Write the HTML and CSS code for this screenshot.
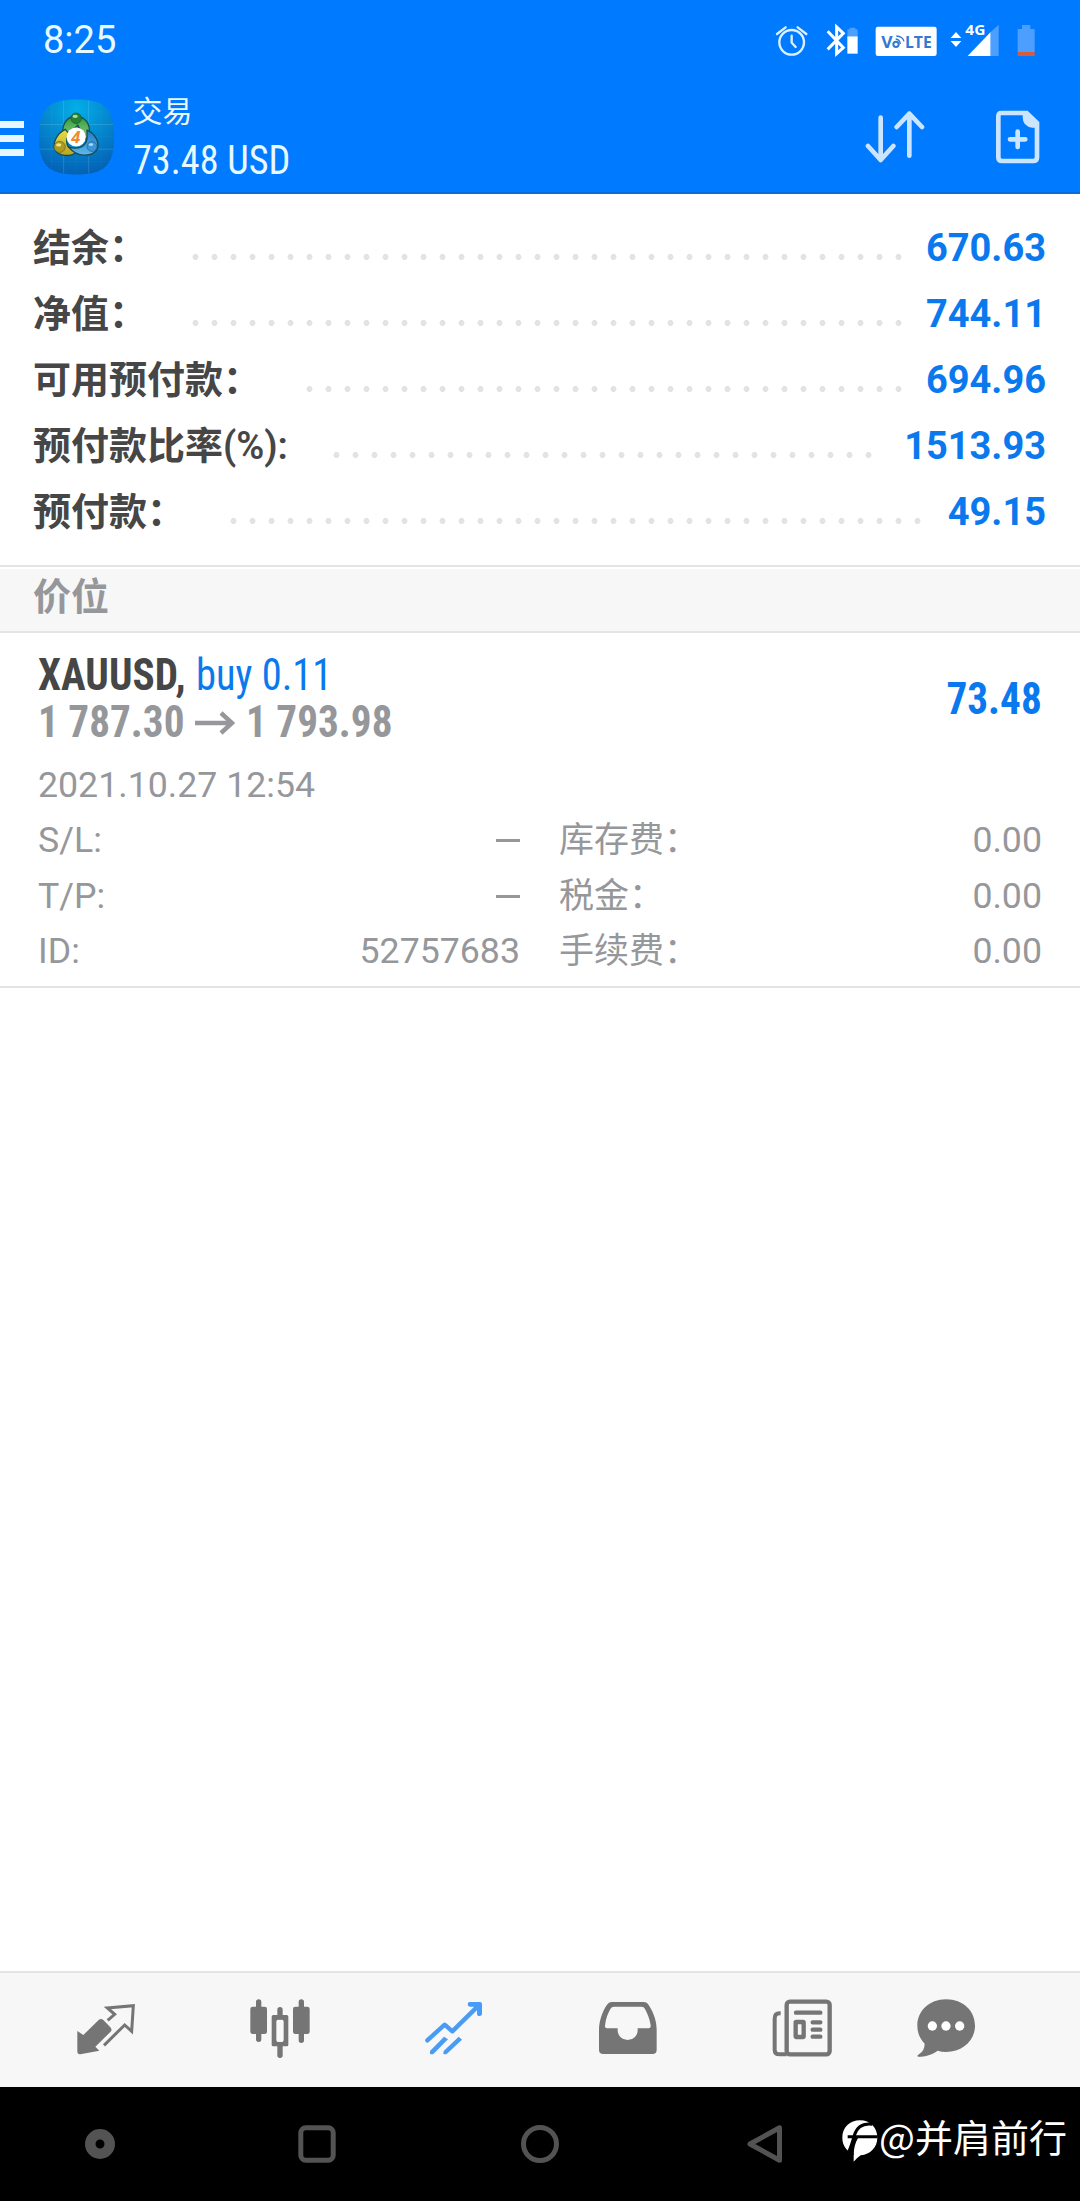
FILE: index.html
```html
<!DOCTYPE html>
<html lang="zh-CN">
<head>
<meta charset="utf-8">
<title>交易</title>
<link rel="stylesheet" href="styles.css">
</head>
<body>
<div class="screen">
  <header class="top">
    <div class="status">
      <span class="clock">8:25</span>
      <svg class="status-icons" width="270" height="44" viewBox="100 60 810 132" aria-hidden="true">
        <g fill="none" stroke="#dcf0ff" stroke-width="7" stroke-linecap="round">
          <circle cx="156" cy="127" r="37"/>
          <path d="M156 107V128L168 141M112 102L138 82M200 102L174 82"/>
        </g>
        <path d="M264 94L311 143L291 161V81L311 100L264 148" fill="none" stroke="#fff" stroke-width="9"/>
        <path d="M323 109V88H330V83H347V88H354V109Z" fill="#4d9fff"/>
        <path d="M323 109H354V161H323Z" fill="#fff"/>
        <rect x="408" y="80" width="183" height="88" rx="7" fill="#fff"/>
        <text class="volte" x="425" y="143" textLength="34" lengthAdjust="spacingAndGlyphs">V</text>
        <text class="volte" x="496" y="143" textLength="80" lengthAdjust="spacingAndGlyphs">LTE</text>
        <circle cx="469" cy="133" r="8" fill="none" stroke="#3578d4" stroke-width="6"/>
        <path d="M468 117Q480 118 482 132M470 108Q489 109 493 124" fill="none" stroke="#3578d4" stroke-width="4"/>
        <path d="M633 114L649 96L665 114ZM633 123H665L649 141Z" fill="#fff"/>
        <path d="M684 168L753 96V168Z" fill="#fff"/>
        <path d="M753 96L777 74V168H753Z" fill="#4d9fff"/>
        <text class="network" x="677" y="104" textLength="60" lengthAdjust="spacingAndGlyphs">4G</text>
        <path d="M834 156V87H847V75H872V87H885V156Z" fill="#4d9fff"/>
        <path d="M834 156H885V168H834Z" fill="#d95a3c"/>
      </svg>
    </div>
    <div class="appbar">
      <svg class="menu" width="24" height="36" viewBox="0 0 24 36"><path d="M0 0H24V7H0ZM0 14H24V21H0ZM0 28H24V35H0Z" fill="#e8f7ff"/></svg>
      <svg class="logo" width="75" height="76" viewBox="0 0 228 228">
        <defs>
          <radialGradient id="tile" cx=".5" cy=".12" r=".9"><stop offset="0" stop-color="#03aee9"/><stop offset=".5" stop-color="#0487cd"/><stop offset="1" stop-color="#0360b5"/></radialGradient>
          <linearGradient id="green" x2="0" y2="1"><stop offset="0" stop-color="#2f9b3e"/><stop offset="1" stop-color="#8fd07e"/></linearGradient>
          <linearGradient id="gold" x2="0" y2="1"><stop offset="0" stop-color="#e8dd4a"/><stop offset="1" stop-color="#b9a41f"/></linearGradient>
          <linearGradient id="sky" x2="0" y2="1"><stop offset="0" stop-color="#2378c4"/><stop offset="1" stop-color="#5db9ee"/></linearGradient>
        </defs>
        <path d="M114 0C200 0 228 28 228 114S200 228 114 228S0 200 0 114S28 0 114 0Z" fill="url(#tile)"/>
        <path d="M75 3V225M151 3V225M3 76H225M3 151H225" stroke="#fff" stroke-opacity=".14" stroke-width="3"/>
        <path d="M38 6V222M113 0V228M188 6V222M6 38H222M0 113H228M6 188H222" stroke="#fff" stroke-opacity=".05" stroke-width="2"/>
        <g stroke="#174e55" stroke-width="4">
          <path d="M72 100C72 65 93 51 112 51S153 66 153 91C153 109 147 117 140 122L118 78L92 104Z" fill="url(#green)"/>
          <path d="M80 91C52 105 42 132 48 151C58 173 94 176 113 160L94 148C80 138 83 118 91 104Z" fill="url(#gold)"/>
          <path d="M146 93C174 104 184 135 177 151C164 175 115 178 91 145C117 153 143 145 146 119Z" fill="url(#sky)"/>
        </g>
        <circle cx="113" cy="114" r="29" fill="#fff"/>
        <circle cx="113" cy="57" r="16" fill="#287f36" stroke="#18542c" stroke-width="2"/>
        <circle cx="63" cy="144" r="17" fill="#ae9920" stroke="#65672a" stroke-width="2"/>
        <circle cx="161" cy="143" r="15" fill="#3b95d6" stroke="#1c5f9e" stroke-width="2"/>
        <ellipse cx="110" cy="51" rx="8" ry="5" fill="#a6df9a"/><ellipse cx="60" cy="138" rx="8" ry="5" fill="#f0e78c"/><ellipse cx="158" cy="137" rx="7" ry="4" fill="#a7dcff"/>
        <text class="logo-four" x="98" y="132">4</text>
      </svg>
      <div class="titles">
        <div class="title">交易</div>
        <div class="balance"><span class="cond">73.48 USD</span></div>
      </div>
      <svg class="action sort" width="60" height="54" viewBox="375 333 180 162"><path d="M422 353V480M384 438L422 480L460 438M508 467V341M470 381L508 341L546 381" fill="none" stroke="#cce5ff" stroke-width="14" stroke-linecap="round" stroke-linejoin="round"/></svg>
      <svg class="action" width="46" height="54" viewBox="766 330 138 162">
        <path d="M785 339H861L892 369V472Q892 483 881 483H787Q776 483 776 472V349Q776 339 785 339Z" fill="none" stroke="#cce5ff" stroke-width="14"/>
        <path d="M849 337H865L894 366V383H878Q849 380 849 352Z" fill="#cce5ff"/>
        <path d="M834 395V441M811 418H857" stroke="#cce5ff" stroke-width="14" stroke-linecap="round"/>
      </svg>
    </div>
  </header>

  <section class="summary">
    <div class="sum-row"><span class="sum-label">结余：</span><i class="dots" style="width:722px"></i><b class="sum-value">670.63</b></div>
    <div class="sum-row"><span class="sum-label">净值：</span><i class="dots" style="width:722px"></i><b class="sum-value">744.11</b></div>
    <div class="sum-row"><span class="sum-label">可用预付款：</span><i class="dots" style="width:608px"></i><b class="sum-value">694.96</b></div>
    <div class="sum-row"><span class="sum-label">预付款比率(%):</span><i class="dots" style="width:551px"></i><b class="sum-value">1513.93</b></div>
    <div class="sum-row"><span class="sum-label">预付款：</span><i class="dots" style="width:703px"></i><b class="sum-value">49.15</b></div>
  </section>

  <h2 class="section-title">价位</h2>

  <section class="position">
    <div class="pos-head">
      <div>
        <div class="pos-line"><span class="cond symbol">XAUUSD,</span><span class="cond side">buy 0.11</span></div>
        <div class="pos-line prices"><span class="cond price">1 787.30</span><svg class="arrow" width="40" height="24" viewBox="0 0 40 24"><path d="M0 12H37M26 2L37 12L26 22" fill="none" stroke="#96979b" stroke-width="4.4"/></svg><span class="cond price">1 793.98</span></div>
      </div>
      <div class="profit"><span class="cond">73.48</span></div>
    </div>
    <div class="date">2021.10.27 12:54</div>
    <div class="details">
      <span>S/L:</span><span class="dash"></span><span class="zh">库存费：</span><span>0.00</span>
      <span>T/P:</span><span class="dash"></span><span class="zh">税金：</span><span>0.00</span>
      <span>ID:</span><span>52757683</span><span class="zh">手续费：</span><span>0.00</span>
    </div>
  </section>

  <nav class="tabs">
    <div class="tab"><svg width="60" height="60" viewBox="108 114 180 180">
      <path d="M203 181L224 163L202 144L280 137L275 214L254 195L192 256" fill="none" stroke="#757575" stroke-width="9"/>
      <path d="M112 213L130 225L176 180Q183 174 190 180L211 202Q218 209 211 216L166 260L178 272L121 283Q112 284 112 274Z" fill="#757575"/>
    </svg></div>
    <div class="tab"><svg width="60" height="60" viewBox="629 114 180 180">
      <path d="M655 126V238M783 126V241M719 149V170M719 255V286" stroke="#757575" stroke-width="16" stroke-linecap="round"/>
      <rect x="630" y="140" width="50" height="82" rx="7" fill="#757575"/><rect x="758" y="140" width="50" height="82" rx="7" fill="#757575"/>
      <path fill-rule="evenodd" d="M699 165H739Q744 165 744 170V254Q744 259 739 259H699Q694 259 694 254V170Q694 165 699 165ZM713 179Q708 179 708 185V240Q708 246 713 246H725Q730 246 730 240V185Q730 179 725 179Z" fill="#757575"/>
    </svg></div>
    <div class="tab"><svg width="60" height="60" viewBox="1152 114 180 180">
      <path d="M1162 241L1214 194L1237 214L1313 139" fill="none" stroke="#4a9bf3" stroke-width="13" stroke-linecap="round" stroke-linejoin="round"/>
      <path d="M1290 126H1320Q1326 126 1326 132V161Q1326 168 1319 168Q1311 168 1311 161V151L1301 140H1290Q1283 140 1283 133T1290 126Z" fill="#459df9"/>
      <path d="M1170 273L1212 230L1224 238L1181 281Q1175 285 1170 281ZM1211 273L1256 230L1266 239L1221 281Q1214 285 1210 281Z" fill="#4a9bf3"/>
    </svg></div>
    <div class="tab"><svg width="60" height="60" viewBox="115 114 180 180">
      <path fill-rule="evenodd" d="M155 126H252Q262 126 267 135C282 158 291 183 291 210V269Q291 282 278 282H131Q118 282 118 269V210C118 184 127 156 142 134Q147 126 155 126ZM163 140Q156 140 152 147C145 160 138 176 136 197Q135 205 142 205H174V211A30 29 0 0 0 234 211V205H267Q274 205 273 196C270 176 263 160 256 147Q253 140 246 140Z" fill="#757575"/>
    </svg></div>
    <div class="tab"><svg width="60" height="60" viewBox="637 114 180 180">
      <rect x="681" y="125" width="129" height="158" rx="10" fill="none" stroke="#757575" stroke-width="13"/>
      <path d="M663 160H660Q645 160 645 176V269Q645 283 660 283H681" fill="none" stroke="#757575" stroke-width="12"/>
      <path d="M709 158H782M759 187H782M759 209H782M759 230H782" stroke="#757575" stroke-width="13" stroke-linecap="round"/>
      <rect x="708" y="186" width="24" height="45" rx="2" fill="none" stroke="#757575" stroke-width="13"/>
    </svg></div>
    <div class="tab"><svg width="60" height="60" viewBox="1068 114 180 180">
      <path d="M1158 118C1210 118 1245 153 1245 197S1208 276 1158 276Q1145 276 1133 272C1115 284 1098 290 1074 290Q1070 286 1077 283Q1094 272 1094 251Q1072 229 1072 197C1072 153 1108 118 1158 118Z" fill="#757575"/>
      <g fill="#fff"><circle cx="1117" cy="198" r="14"/><circle cx="1158" cy="198" r="14"/><circle cx="1199" cy="198" r="14"/></g>
    </svg></div>
  </nav>

  <footer class="sysnav">
    <svg width="40" height="40" viewBox="0 0 40 40"><circle cx="20" cy="20" r="9.75" fill="none" stroke="#535353" stroke-width="10.5"/></svg>
    <svg class="recent" width="40" height="40" viewBox="0 0 40 40"><rect x="3.8" y="3.8" width="32.4" height="32.4" rx="5" fill="none" stroke="#535353" stroke-width="5"/></svg>
    <svg class="home" width="40" height="40" viewBox="0 0 40 40"><circle cx="20" cy="20" r="16.5" fill="none" stroke="#535353" stroke-width="5"/></svg>
    <svg class="back" width="40" height="40" viewBox="0 0 40 40"><path d="M34.5 3.8V36.2L5 20Z" fill="none" stroke="#535353" stroke-width="5" stroke-linejoin="round"/></svg>
    <div class="author">
      <svg width="36" height="42" viewBox="845 484 108 126">
        <path d="M899 485C930 485 951 508 951 537C951 566 930 587 901 590Q888 599 880 609V585C857 577 846 559 846 537C846 506 869 485 899 485Z" fill="#fff"/>
        <path d="M936 497C906 493 890 505 882 530C877 548 873 562 866 577M862 534H952" fill="none" stroke="#000" stroke-width="9"/>
        <path d="M893 538Q880 560 880 590L861 580Q874 562 881 538Z" fill="#000"/>
      </svg><span>@并肩前行</span>
    </div>
  </footer>
</div>
</body>
</html>
```
FILE: styles.css
```css
* { box-sizing: border-box; }
body {
  margin: 0;
  background: #fff;
  font-family: Roboto, "Noto Sans CJK SC", sans-serif;
}
svg { display: block; flex: none; }
.screen {
  width: 1080px;
  height: 2201px;
  display: flex;
  flex-direction: column;
  overflow: hidden;
}

/* Header */
.top {
  height: 194px;
  background: #007aff;
  border-bottom: 2px solid #0d6bd6;
  color: #e8f9ff;
}
.status {
  height: 80px;
  padding: 0 37px 0 43px;
  display: flex;
  justify-content: space-between;
}
.clock { font-size: 38px; line-height: 80px; }
.status-icons { margin-top: 20px; }
.volte { font: 700 49px "Open Sans", sans-serif; fill: #3578d4; }
.network { font: 700 43px "Open Sans", sans-serif; fill: #fff; }
.appbar {
  height: 112px;
  display: flex;
  align-items: flex-start;
}
.menu { margin-top: 41px; }
.logo { margin: 19px 0 0 14.5px; }
.logo-four { font: italic 700 50px "Open Sans", sans-serif; fill: #f08a2c; }
.titles { margin-left: 19px; flex: 1; }
.title { font-size: 30px; line-height: 40px; margin-top: 12px; }
.balance { font-size: 40px; line-height: 48px; margin-top: 5px; }
.cond {
  display: inline-block;
  white-space: pre;
  font-family: "Roboto Condensed", Roboto, sans-serif;
  font-stretch: 75%;
  transform: scaleX(.937);
  transform-origin: left;
}
.balance .cond { transform: scaleX(.955); }
.action { margin: 30px 39px 0 0; }
.sort { margin-top: 31px; margin-right: 70px; }

/* Account summary */
.summary { height: 371px; padding: 21px 34px 0 33px; }
.sum-row { height: 66px; display: flex; }
.sum-label, .sum-value { font-size: 38px; line-height: 66px; font-weight: 700; white-space: nowrap; }
.sum-label { color: #464646; font-weight: 600; }
.sum-value { color: #0b79ee; margin-left: auto; }
.dots {
  flex: none;
  height: 8px;
  margin: 38px 0 0 39px;
  background: radial-gradient(circle at 9.5px 4px, #e3e3e3 2.7px, transparent 3.3px) 0 0 / 19px 8px repeat-x;
}

.section-title {
  height: 68px;
  margin: 0;
  padding-left: 33px;
  border: solid #e4e4e4;
  border-width: 2px 0;
  background: #f7f7f7;
  box-shadow: inset 0 2px #fff;
  color: #96979b;
  font-size: 38px;
  line-height: 60px;
  font-weight: 700;
}

/* Open position */
.position {
  height: 355px;
  padding: 19px 38px 0;
  border-bottom: 2px solid #e4e4e4;
  color: #96979b;
  font-size: 35.7px;
}
.pos-head { display: flex; justify-content: space-between; font-size: 44px; height: 105px; }
.pos-line { height: 47px; line-height: 47px; display: flex; align-items: center; }
.symbol { color: #464646; font-weight: 700; }
.side { color: #0b79ee; transform: scaleX(.92); }
.prices, .profit { font-weight: 700; }
.price { margin-right: -10px; }
.profit { color: #0b79ee; line-height: 94px; }
.profit .cond { transform-origin: right; }
.arrow { margin: 0 11px; }
.date { line-height: 56px; }
.details {
  display: grid;
  grid-template-columns: 100px 382px 240px 1fr;
  grid-auto-rows: 55.5px;
  line-height: 55px;
}
.zh { font-size: 35px; padding-left: 39px; }
.details > :nth-child(even) { justify-self: end; }
.dash { width: 24px; height: 3px; background: #96979b; margin-top: 26px; }

/* Bottom bars */
.tabs {
  margin-top: auto;
  height: 116px;
  padding: 25px 0 0 19px;
  border-top: 2px solid #e4e4e4;
  background: #f7f7f7;
  display: flex;
}
.tab { width: 174px; display: flex; justify-content: center; align-items: flex-start; }
.tab:last-child { width: 114px; }
.sysnav {
  height: 114px;
  padding-left: 80px;
  background: #000;
  display: flex;
  align-items: center;
}
.recent { margin-left: 177px; }
.home { margin-left: 183px; }
.back { margin-left: 185px; }
.author {
  margin: -16px 0 0 57px;
  display: flex;
  align-items: center;
  gap: 1px;
  color: #fff;
  font: 38px/50px "Noto Sans CJK SC", sans-serif;
  white-space: nowrap;
}
.author svg { margin-top: 10px; }
```
